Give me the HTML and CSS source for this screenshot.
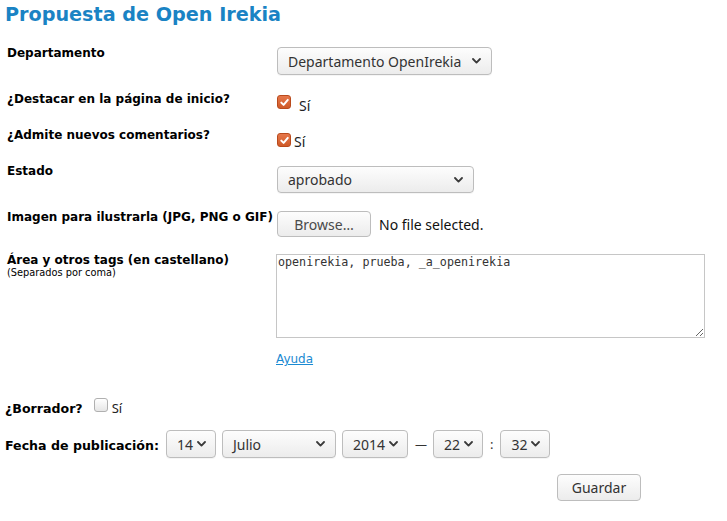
FILE: index.html
```html
<!DOCTYPE html>
<html lang="es">
<head>
<meta charset="utf-8">
<title>Propuesta de Open Irekia</title>
<link rel="stylesheet" href="styles.css">
</head>
<body>
<div class="page">
  <h1 class="title">Propuesta de Open Irekia</h1>
  <form class="form">
    <div class="row row-dept">
      <div class="label">Departamento</div>
      <div class="control">
        <div class="select select-dept"><span>Departamento OpenIrekia</span><svg class="chev" width="9" height="6" viewBox="0 0 9 6"><path d="M1 1 L4.5 4.6 L8 1" /></svg></div>
      </div>
    </div>
    <div class="row row-featured">
      <div class="label">¿Destacar en la página de inicio?</div>
      <div class="control check-line">
        <span class="checkbox checked check-high"><svg width="11" height="11" viewBox="0 0 11 11"><path d="M2.3 5.6 L4.6 7.9 L8.8 2.9" /></svg></span>
        <span class="opt opt-wide">Sí</span>
      </div>
    </div>
    <div class="row row-comments">
      <div class="label">¿Admite nuevos comentarios?</div>
      <div class="control check-line">
        <span class="checkbox checked check-low"><svg width="11" height="11" viewBox="0 0 11 11"><path d="M2.3 5.6 L4.6 7.9 L8.8 2.9" /></svg></span>
        <span class="opt">Sí</span>
      </div>
    </div>
    <div class="row row-state">
      <div class="label">Estado</div>
      <div class="control">
        <div class="select select-state"><span>aprobado</span><svg class="chev" width="9" height="6" viewBox="0 0 9 6"><path d="M1 1 L4.5 4.6 L8 1" /></svg></div>
      </div>
    </div>
    <div class="row row-image">
      <div class="label">Imagen para ilustrarla (JPG, PNG o GIF)</div>
      <div class="control file-line">
        <span class="button browse">Browse…</span>
        <span class="file-name">No file selected.</span>
      </div>
    </div>
    <div class="row row-tags">
      <div class="label">Área y otros tags (en castellano)<span class="note">(Separados por coma)</span></div>
      <div class="control">
        <textarea class="tags" readonly>openirekia, prueba, _a_openirekia</textarea>
        <a class="help" href="#">Ayuda</a>
      </div>
    </div>
    <div class="inline-row draft-row">
      <span class="inline-label draft-label">¿Borrador?</span>
      <span class="checkbox draft-box"></span>
      <span class="opt draft-opt">Sí</span>
    </div>
    <div class="inline-row date-row">
      <span class="inline-label date-label">Fecha de publicación:</span>
      <div class="select sel-day"><span>14</span><svg class="chev" width="9" height="6" viewBox="0 0 9 6"><path d="M1 1 L4.5 4.6 L8 1" /></svg></div>
      <div class="select sel-month"><span>Julio</span><svg class="chev" width="9" height="6" viewBox="0 0 9 6"><path d="M1 1 L4.5 4.6 L8 1" /></svg></div>
      <div class="select sel-year"><span>2014</span><svg class="chev" width="9" height="6" viewBox="0 0 9 6"><path d="M1 1 L4.5 4.6 L8 1" /></svg></div>
      <span class="sep dash">—</span>
      <div class="select sel-hour"><span>22</span><svg class="chev" width="9" height="6" viewBox="0 0 9 6"><path d="M1 1 L4.5 4.6 L8 1" /></svg></div>
      <span class="sep colon">:</span>
      <div class="select sel-min"><span>32</span><svg class="chev" width="9" height="6" viewBox="0 0 9 6"><path d="M1 1 L4.5 4.6 L8 1" /></svg></div>
    </div>
    <div class="actions">
      <span class="button save">Guardar</span>
    </div>
  </form>
</div>
</body>
</html>
```
FILE: styles.css
```css
html, body {
  margin: 0;
  padding: 0;
  background: #ffffff;
}

.page {
  padding-left: 5px;
  font-family: "DejaVu Sans", sans-serif;
  color: #000;
}

.title {
  margin: 4px 0 0;
  font-family: "DejaVu Sans", sans-serif;
  font-weight: bold;
  font-size: 19.2px;
  line-height: 22px;
  color: #1a83c4;
}

.form {
  margin-top: 20px;
}

.row {
  display: flex;
  align-items: flex-start;
}

.row-featured { margin-top: 17px; }
.row-comments { margin-top: 13px; }
.row-state { margin-top: 13px; }
.row-image { margin-top: 17px; }
.row-tags { margin-top: 16px; }

.label {
  width: 271px;
  flex: none;
  box-sizing: border-box;
  padding-left: 2px;
  font-weight: bold;
  font-size: 12px;
  line-height: 14px;
}

.note {
  display: block;
  font-weight: normal;
  font-size: 9.8px;
  line-height: 12px;
  margin-top: 0;
}

.control {
  display: flex;
  flex-direction: column;
  align-items: flex-start;
}

.select {
  box-sizing: border-box;
  display: flex;
  align-items: center;
  justify-content: space-between;
  height: 28px;
  padding: 0 10px 0 10px;
  border: 1px solid #bdbdbd;
  border-radius: 4px;
  background: linear-gradient(#fdfdfd, #ececec);
  font-family: "Noto Sans", "Open Sans", sans-serif;
  font-size: 14px;
  color: #333;
  box-shadow: 0 1px 0 rgba(0,0,0,0.04);
}

.chev {
  flex: none;
}

.chev path {
  fill: none;
  stroke: #3a3a3a;
  stroke-width: 1.8;
  stroke-linecap: round;
  stroke-linejoin: round;
}

.select-dept {
  margin-left: 1px;
  margin-top: 1px;
  width: 215px;
}

.select-state {
  margin-left: 1px;
  margin-top: 2px;
  width: 197px;
  height: 27px;
}

.check-line {
  flex-direction: row;
  align-items: flex-start;
  padding-left: 1px;
}

.checkbox {
  box-sizing: border-box;
  display: inline-flex;
  align-items: center;
  justify-content: center;
  width: 14px;
  height: 14px;
  border-radius: 3px;
  border: 1px solid #b0b0b0;
  background: linear-gradient(#ffffff, #e6e6e6);
  flex: none;
}

.checkbox.checked {
  border-color: #b94a1c;
  background: linear-gradient(#e6774a, #cf5a28);
}

.checkbox svg path {
  fill: none;
  stroke: #ffffff;
  stroke-width: 2;
  stroke-linecap: round;
  stroke-linejoin: round;
}

.check-high { margin-top: 3px; }
.check-low { margin-top: 5px; }

.opt {
  font-family: "Noto Sans", "Open Sans", sans-serif;
  font-size: 14px;
  line-height: 18px;
  color: #222;
  margin-top: 5px;
  margin-left: 3px;
}

.opt-wide {
  margin-left: 8px;
}

.file-line {
  flex-direction: row;
  align-items: center;
  padding-left: 1px;
  margin-top: 1px;
}

.button {
  box-sizing: border-box;
  display: inline-flex;
  align-items: center;
  justify-content: center;
  height: 26px;
  border: 1px solid #bdbdbd;
  border-radius: 4px;
  background: linear-gradient(#fdfdfd, #ececec);
  font-family: "Noto Sans", "Open Sans", sans-serif;
  font-size: 14px;
  color: #4a4a4a;
}

.browse {
  width: 94px;
}

.file-name {
  margin-left: 8px;
  font-family: "Noto Sans", "Open Sans", sans-serif;
  font-size: 14px;
  color: #111;
}

.tags {
  box-sizing: border-box;
  display: block;
  margin: 1px 0 0;
  width: 429px;
  height: 84px;
  padding: 0 1px;
  border: 1px solid #c6c6c6;
  border-radius: 0;
  background: #fff;
  font-family: "DejaVu Sans Mono", monospace;
  font-size: 11.7px;
  line-height: 14px;
  color: #333;
  resize: both;
  outline: none;
}

.help {
  margin-top: 14px;
  font-size: 12px;
  line-height: 14px;
  color: #1a8ad2;
  text-decoration: underline;
}

.inline-row {
  display: flex;
  align-items: flex-start;
}

.inline-label {
  font-weight: bold;
  font-size: 12.6px;
  line-height: 15px;
}

.draft-row {
  margin-top: 32px;
}

.draft-label {
  margin-top: 3px;
}

.draft-box {
  margin-left: 11px;
}

.draft-opt {
  font-size: 13px;
  line-height: 16px;
  margin-top: 2px;
  margin-left: 4px;
}

.date-row {
  margin-top: 14px;
  align-items: center;
  gap: 6px;
}

.date-label {
  margin-right: 1px;
  padding-top: 2px;
}

.sel-day { width: 50px; padding-right: 9px; }
.sel-month { width: 114px; }
.sel-year { width: 66px; padding-right: 9px; }
.sel-hour { width: 50px; padding-right: 9px; }
.sel-min { width: 50px; padding-right: 9px; }

.sep {
  font-family: "Noto Sans", "Open Sans", sans-serif;
  color: #333;
}

.dash {
  font-size: 12px;
  margin: 0 0 0 1px;
}

.colon {
  font-size: 13px;
  margin: 0 1px;
}

.actions {
  display: flex;
  justify-content: flex-end;
  width: 636px;
  margin-top: 16px;
}

.save {
  width: 84px;
  height: 27px;
  color: #333;
}
```
